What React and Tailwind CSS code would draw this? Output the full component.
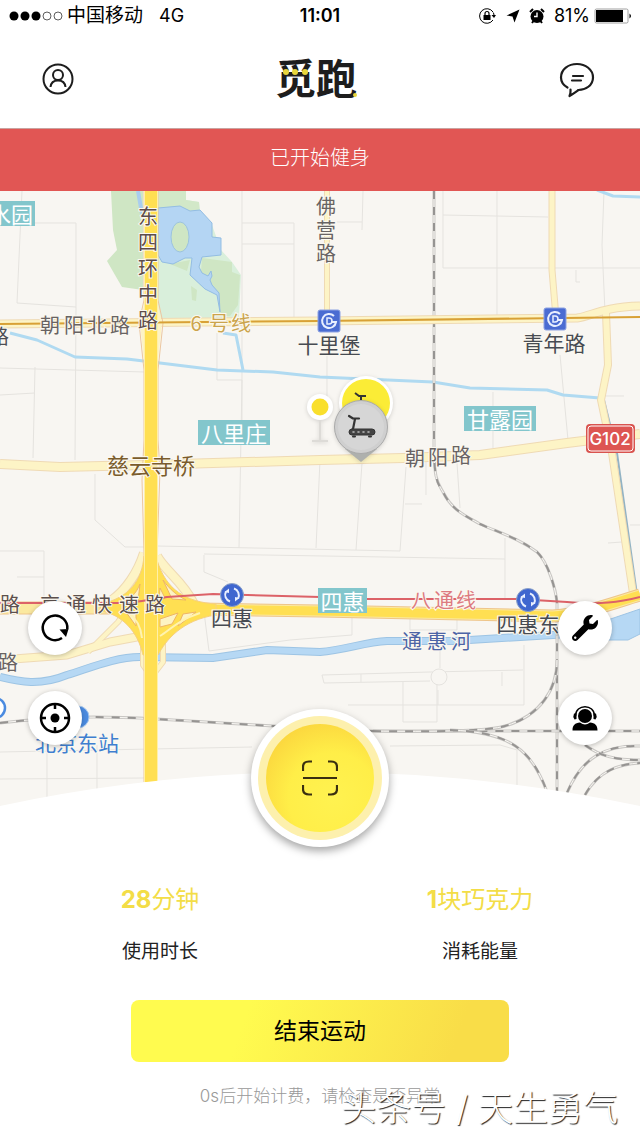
import { FaWrench } from "react-icons/fa";

// thin grey streets in the background of the map
const streets = [
  "M22 191L17 303L76 307", "M0 223H76V307L75 460", "M35 367L33 458", "M0 395L35 393", "M0 368L145 372",
  "M242 191V380L239 548", "M242 223H294V317", "M242 244H294", "M217 333V380H242V420", "M327 340V400",
  "M95 474V520L125 547H145", "M0 551H44V600", "M17 577H44", "M157 546L400 551L406 467",
  "M204 555V572L228 582", "M204 554L505 559", "M505 538V600", "M362 463L356 550", "M320 460L316 548",
  "M443 191V268H640", "M497 191V317", "M443 215L548 217", "M604 191L602 245L605 312", "M363 191L362 230", "M337 222H362",
  "M576 270V282H580", "M560 355L568 440", "M493 392V448", "M457 463L460 508", "M426 460V495", "M405 504H422",
  "M608 543L622 542", "M630 525H640", "M600 396H624",
  "M204 612L209 651L290 640L352 635V618", "M410 618V630H457V618", "M322 675L430 672L523 670", "M322 675L324 683L430 681",
  "M361 674V682", "M403 682V722H437V682", "M348 705H524V645", "M438 690V705", "M440 645V668", "M502 672V686",
  "M390 746L500 745L517 750V790", "M47 750V800", "M97 745V790", "M0 752L252 747", "M0 779L145 778",
];

const rails = [
  "M434 191V440C434 480 437 482 443 492C452 510 464 515 480 524C500 533 518 538 537 552C548 562 556 590 557 603V795",
  "M0 723C60 716 100 716 157 719L273 726L370 731H640",
  "M373 731C430 732 490 731 505 726C540 716 557 690 557 660",
  "M450 730C510 732 532 750 547 792",
  "M567 793C582 757 606 745 640 746",
  "M585 795C599 770 620 764 640 763",
  "M585 745C600 756 615 760 640 760",
];

// pale secondary roads: [path, width]
const paleRoads = [
  ["M0 464L60 467L145 465L320 460L403 458L480 455L567 443L640 434", 10],
  ["M327 191V320", 6],
  ["M552 191V270L556 318", 7],
  ["M606 313L608 365L601 400L612 453L634 600", 8],
  ["M0 324L320 321L577 318C592 316 602 307 640 306", 9],
  ["M0 660L67 655L110 642L142 636", 9],
  ["M88 652L118 622L140 590", 6],
  ["M144 553C138 572 126 590 112 600", 10],
  ["M157 556C166 572 182 580 194 604", 10],
  ["M143 640V665L150 675", 6],
  ["M163 640V662L153 675", 6],
];

const river = "M0 677C20 682 40 686 67 675C90 668 115 657 140 657L213 658L267 650L320 652C345 650 365 642 387 641L453 641L553 635L600 632";

const expressway = "M0 608H110L200 609L320 611L553 616C585 614 610 604 640 595";

const grey = "#686363";

// road names are set one character at a time along their road
const roadLabels = [
  { text: "朝阳北路", x: [50, 74, 97, 120], y: [324], fill: grey },
  { text: "东四环中路", x: [148, 148, 148, 148, 148], y: [215, 241, 267, 293, 319], fill: "#5d4c49" },
  { text: "佛营路", x: [326, 326, 326], y: [205, 229, 252], fill: grey },
  { text: "6号线", x: [196, 219, 241], y: [322], fill: "#cba44c" },
  { text: "朝阳路", x: [415, 438, 461], y: [457, 456, 454], fill: grey },
  { text: "京通快速路", x: [50, 76, 102, 129, 155], y: [603], fill: "#5c504d" },
  { text: "八通线", x: [421, 444, 466], y: [599], fill: "#dd7a80" },
  { text: "通惠河", x: [412, 437, 461], y: [640], fill: "#4c64a6" },
  { text: "路", x: [-1], y: [335], fill: "#4d4f55" },
  { text: "路", x: [10], y: [603], fill: "#5c504d" },
  { text: "路", x: [8], y: [661], fill: grey },
];

const placeLabels = [
  { text: "十里堡", x: 329, y: 344, size: 21, fill: "#474b52" },
  { text: "青年路", x: 554, y: 342, size: 21, fill: "#474b52" },
  { text: "慈云寺桥", x: 151, y: 464, size: 22, fill: "#7a5c2c" },
  { text: "四惠", x: 232, y: 617, size: 21, fill: "#474b52" },
  { text: "四惠东", x: 528, y: 623, size: 21, fill: "#474b52" },
  { text: "北京东站", x: 77, y: 742, size: 21, fill: "#3f7fd0" },
];

const areaTags = [
  { text: "水园", x: -13, y: 201, w: 48 },
  { text: "八里庄", x: 198, y: 420, w: 72 },
  { text: "甘露园", x: 464, y: 406, w: 72 },
  { text: "四惠", x: 318, y: 588, w: 49 },
];

function SubwayStop({ x, y }) {
  return (
    <g transform={`translate(${x} ${y})`}>
      <rect x="-11" y="-11" width="22" height="22" rx="2" fill="#4a6cd2" stroke="#8da2e2" />
      <path d="M5 -5A7 7 0 1 0 7 1H2" fill="none" stroke="#e8efff" strokeWidth="2" />
      <path d="M-2 -3V3H0A3 3 0 0 0 0 -3Z" fill="none" stroke="#e8efff" strokeWidth="1.5" />
    </g>
  );
}

function LoopStop({ x, y }) {
  return (
    <g transform={`translate(${x} ${y})`}>
      <circle r="11.5" fill="#3f66cf" stroke="#8da2c8" />
      <g fill="none" stroke="#e8efff" strokeWidth="2">
        <path d="M-2 6.5A7 7 0 0 1 -6 -3.500" />
        <path d="M2 -6.5A7 7 0 0 1 6 3.500" />
      </g>
      <path d="M-7.500 -3L-3 -6.500L-3 -2ZM7.500 3L3 6.500L3 2Z" fill="#e8efff" />
    </g>
  );
}

function Treadmill() {
  return (
    <g stroke="#333" strokeLinecap="round" strokeLinejoin="round" fill="none">
      <path d="M-12 -10L-8 -7.5H-2M-6 -7L-8 3" strokeWidth="2.200" />
      <rect x="-12" y="3" width="26" height="6" rx="3" fill="#444" strokeWidth="1" />
      <path d="M-8 6H11" stroke="#bbb" strokeDasharray="1 4" strokeWidth="1.6" />
      <path d="M-8 10.5H-6M8 10.5H10" strokeWidth="2" />
    </g>
  );
}

function CityMap() {
  return (
    <svg
      viewBox="0 191 640 615"
      className="block w-full font-['Noto_Sans_CJK_SC',sans-serif]"
      preserveAspectRatio="xMidYMid slice"
    >
      <rect y="191" width="640" height="615" fill="#f8f6f2" />

      {/* park and lake */}
      <path d="M111 191L113 230L117 250L107 261L115 275L122 287L143 290V191Z" fill="#cfe6c4" />
      <path d="M158 191H186V200L199 202L200 212L212 225L221 250L232 262L241 275L239 318H158Z" fill="#d9efdb" />
      <path d="M158 191H186V200L199 202L200 215H158Z" fill="#d2e8c8" />
      <path d="M202 258L232 262V272L240 275L238 305L230 316H221L217 292L200 285Z" fill="#cfe6c4" />
      <path d="M170 264L190 260L187 271ZM191 286L197 290L196 301L192 300Z" fill="#cfe6c4" />
      <path
        d="M158 208L180 206L190 211L200 210L212 223V237L221 238V255L202 257L199 267L202 273L208 276L211 271L212 276L210 280L212 285L219 293L220 312L217 295L205 289L190 275L192 258L185 258L173 264L162 262L158 255Z"
        fill="#b4d5f3"
        stroke="#93bde3"
        strokeWidth="1"
      />
      <ellipse cx="180" cy="237" rx="9" ry="15" fill="#cfe6c4" stroke="#9cc3df" />
      <path d="M138 191L142 214" stroke="#a9cdee" strokeWidth="4" />

      <g fill="none" stroke="#e5e3df" strokeWidth="1">
        {streets.map((d) => (
          <path key={d} d={d} />
        ))}
        <circle cx="439" cy="677" r="8" fill="#f8f6f2" />
      </g>

      {/* water */}
      <g fill="none" stroke="#b0daf1" strokeWidth="3" strokeLinejoin="round">
        <path d="M10 333L37 340L75 357L127 359L160 363L217 370L273 372L320 377L433 382L470 388L547 390L563 395L600 398" />
        <path d="M223 333L236 335L243 370" />
        <path d="M597 190L613 196L640 197" />
        <path d="M604 400L617 453L637 595" strokeWidth="2" stroke="#92b3c4" />
      </g>
      <path d={river} fill="none" stroke="#9dc4e4" strokeWidth="8" />
      <path d={river} fill="none" stroke="#b6d8f4" strokeWidth="6" />
      <path d="M590 626L640 609V634L628 640H590Z" fill="#b6d8f4" stroke="#9dc4e4" />

      {/* railway */}
      <g fill="none">
        {rails.map((d) => (
          <g key={d}>
            <path d={d} stroke="#c9c7c4" strokeWidth="3" />
            <path d={d} stroke="#f8f6f2" strokeWidth="1" />
            <path d={d} stroke="#969492" strokeWidth="2" strokeDasharray="8 8" />
          </g>
        ))}
      </g>

      {/* secondary roads */}
      <g fill="none" strokeLinejoin="round">
        {paleRoads.map(([d, w]) => (
          <path key={d} d={d} stroke="#efdab4" strokeWidth={w} />
        ))}
        {paleRoads.map(([d, w]) => (
          <path key={d} d={d} stroke="#fdf4c6" strokeWidth={w - 2} />
        ))}
      </g>

      {/* ring road, expressway and the interchange */}
      <g fill="none" strokeLinejoin="round">
        <path d="M144 191V300L139 323L144 370V440L142 480L144 555V782M158 191V300L163 323L158 370V440L160 470L157 555V782" stroke="#ecc7a0" />
        <path d="M145 300L140 323L145 370H157L162 323L157 300Z" fill="#fdf3c4" />
        <path d={expressway} stroke="#eec58a" strokeWidth="13" />
        <path d={expressway} stroke="#fbe9a0" strokeWidth="11" />
        <path d="M120 608L200 609L320 611L553 616C585 614 610 604 640 595" stroke="#ffdf52" strokeWidth="9" />
        <path
          d="M144 556C142 580 130 598 100 604V611C122 614 138 632 143 655H158C166 640 182 620 216 615V604C186 602 166 590 157 560Z"
          fill="#ffdf52"
          stroke="#f6d080"
        />
        <path
          d="M140 584C136 594 130 599 124 601H138ZM163 580C170 590 178 596 186 600L172 599ZM160 588L165 598L159 600ZM160 619L178 613L172 624L160 627ZM183 614L196 612L178 626ZM126 612L136 613V626Z"
          fill="#fdf3c4"
          stroke="#eeb566"
        />
        <path d="M160 636C170 630 178 620 200 613M128 612C136 618 141 628 142 638" stroke="#fff3b0" strokeWidth="2" />
        <path d="M151 191V782" stroke="#fff0a8" strokeWidth="14" />
        <path d="M151 191V782" stroke="#ffdf52" strokeWidth="12" />
      </g>

      {/* metro lines */}
      <path d="M0 324L320 321L640 317" stroke="#d8a136" strokeWidth="2" fill="none" />
      <path
        d="M0 603H117C140 603 150 599 167 597L213 594L320 597L367 599L517 599L567 602C600 605 620 602 640 597"
        stroke="#dc6268"
        strokeWidth="2"
        fill="none"
      />
      <SubwayStop x={329} y={321} />
      <SubwayStop x={555} y={319} />
      <LoopStop x={232} y={595} />
      <LoopStop x={528} y={600} />
      <circle cx="-5" cy="708" r="10" fill="#fff" stroke="#4b8be0" strokeWidth="2.5" />
      <circle cx="78" cy="717" r="11" fill="#4b8be0" stroke="#a8c8ee" />

      {/* labels */}
      <g textAnchor="middle" dominantBaseline="central" paintOrder="stroke" stroke="#fbf8f0" strokeWidth="2">
        {roadLabels.map((l) => (
          <text key={l.text + l.x[0]} x={l.x.join(" ")} y={l.y.join(" ")} fill={l.fill} fontSize="20">
            {l.text}
          </text>
        ))}
        {placeLabels.map((l) => (
          <text key={l.text} x={l.x} y={l.y} fill={l.fill} fontSize={l.size}>
            {l.text}
          </text>
        ))}
      </g>
      <g textAnchor="middle" dominantBaseline="central" fill="#fff" fontSize="22">
        {areaTags.map((t) => (
          <g key={t.text}>
            <rect x={t.x} y={t.y} width={t.w} height="25" fill="#83c6cc" />
            <text x={t.x + t.w / 2} y={t.y + 12}>{t.text}</text>
          </g>
        ))}
      </g>
      <rect x="586" y="424" width="49" height="29" rx="4" fill="#d9534f" />
      <rect x="588" y="426" width="45" height="25" rx="3" fill="#dd5552" stroke="#fff" strokeWidth="1" />
      <text x="610" y="439" textAnchor="middle" dominantBaseline="central" fill="#fff" fontSize="17" fontWeight="500" fontFamily="Inter, sans-serif">
        G102
      </text>

      {/* treadmill pins */}
      <g className="drop-shadow-sm">
        <path d="M320 420V440M312 441H328" stroke="#dddbd7" strokeWidth="2" />
        <circle cx="320" cy="407" r="13" fill="#fff" />
        <circle cx="320" cy="407" r="8.5" fill="#f9df2c" />
      </g>
      <g className="drop-shadow-sm">
        <circle cx="366" cy="403" r="27" fill="#fff" />
        <circle cx="366" cy="403" r="24" fill="#fbec36" />
        <path d="M355 393L359 396H366M361 396V400" stroke="#333" strokeWidth="2" fill="none" />
      </g>
      <g className="drop-shadow-sm">
        <path d="M345 449L361 462L377 449Z" fill="#aeb0ad" />
        <circle cx="361" cy="427" r="26.5" fill="#cfcfcf" stroke="#a9a9a9" />
        <circle cx="361" cy="427" r="23" fill="#d6d6d6" />
        <g transform="translate(361 426)">
          <Treadmill />
        </g>
      </g>

      {/* white arc under the map */}
      <path d="M0 806Q320 738 640 806Z" fill="#fff" />
    </svg>
  );
}

function RoundButton({ label, children }) {
  return (
    <button
      aria-label={label}
      className="flex size-[54px] items-center justify-center rounded-full bg-white text-black shadow-[0_1px_5px_rgba(0,0,0,0.25)]"
    >
      {children}
    </button>
  );
}

function StatusBar() {
  return (
    <div className="flex h-8 items-center px-2 text-lg text-black">
      <div className="flex flex-1 items-center">
        <svg viewBox="0 0 56 12" className="h-3 w-14">
          <circle cx="6" cy="6" r="4.5" />
          <circle cx="17" cy="6" r="4.5" />
          <circle cx="28" cy="6" r="4.5" />
          <circle cx="39" cy="6" r="4" fill="none" stroke="#333" strokeWidth="0.8" />
          <circle cx="50" cy="6" r="4" fill="none" stroke="#333" strokeWidth="0.8" />
        </svg>
        <span className="ml-[3px] text-[19px]">中国移动</span>
        <span className="ml-4">4G</span>
      </div>
      <span className="font-semibold">11:01</span>
      <div className="flex flex-1 items-center justify-end">
        {/* orientation lock */}
        <svg viewBox="0 0 18 18" className="size-[18px]" fill="none" stroke="#000">
          <path d="M15 5A7.300 7.300 0 1 0 15 13M15.300 5.500Q16 7 16 8.500" strokeWidth="1" />
          <path d="M13.500 8L16 11L18 8Z" fill="#000" stroke="none" />
          <rect x="5.500" y="8" width="7" height="5" fill="#000" stroke="none" />
          <path d="M7 8V6.500A2 2 0 0 1 11 6.500V8" strokeWidth="1.200" />
        </svg>
        {/* location arrow */}
        <svg viewBox="0 0 14 14" className="ml-[10px] size-[14px]">
          <path d="M13.500 0.500L0.500 6.500L6.500 7.500L8.500 13.500Z" />
        </svg>
        {/* alarm clock */}
        <svg viewBox="0 0 18 18" className="ml-2 size-[18px]">
          <circle cx="9" cy="9.500" r="6.500" />
          <path d="M9 5.500V9.500H6" stroke="#fff" strokeWidth="1.400" fill="none" />
          <path d="M2 5L5 2M16 5L13 2M4 16L5.500 14M14 16L12.500 14" stroke="#000" strokeWidth="2" />
        </svg>
        <span className="ml-2">81%</span>
        <svg viewBox="0 0 38 16" className="ml-1 h-4 w-[38px]">
          <rect x="1" y="1" width="33" height="14" rx="1.500" fill="none" stroke="#888" strokeWidth="0.800" />
          <rect x="2" y="2" width="27" height="12" />
          <path d="M35.500 5.500Q38.500 8 35.500 10.500Z" />
        </svg>
      </div>
    </div>
  );
}

function Header() {
  return (
    <header className="flex h-24 items-center justify-between pr-11 pb-[2px] pl-10">
      <button aria-label="我的" className="flex size-9 items-center justify-center">
        <svg viewBox="0 0 36 36" className="size-9" fill="none" stroke="#1d1d1d" strokeWidth="2">
          <circle cx="18" cy="18" r="14.5" />
          <circle cx="18" cy="14" r="5" />
          <path d="M10.500 26C11 21.500 14 19.500 18 19.500S25 21.500 25.500 26" />
        </svg>
      </button>
      <h1 className="relative text-[41px] leading-none font-bold text-[#1d1d1d]">
        觅跑
        <svg viewBox="0 0 82 41" className="absolute inset-0 size-full" fill="#e8d63c">
          <circle cx="11" cy="13" r="3" />
          <circle cx="20" cy="13" r="3" />
          <circle cx="30" cy="13" r="3" />
          <circle cx="80" cy="36" r="2" />
        </svg>
      </h1>
      <button aria-label="消息" className="flex size-10 items-center justify-center">
        <svg viewBox="0 0 40 40" className="size-10" fill="none" stroke="#1d1d1d" strokeWidth="2.200" strokeLinecap="round" strokeLinejoin="round">
          <path d="M11.500 28.500C7 26 5 22 5 18.500C5 10 12.500 5 21 5S37 10.500 37 18.500S29.500 31 22.500 31C19 33.500 17 35 13.500 37C15 34 14.500 32 14.500 30.500" />
          <path d="M17 17H27M16 21.500H25" />
        </svg>
      </button>
    </header>
  );
}

function Stat({ number, unit, label }) {
  return (
    <div className="flex flex-1 flex-col items-center gap-5">
      <p className="text-2xl leading-8 text-[#f3dd47]">
        <span className="font-bold">{number}</span>
        {unit}
      </p>
      <p className="text-[19px] leading-8 text-[#222]">{label}</p>
    </div>
  );
}

export default function App() {
  return (
    <div className="relative min-h-screen overflow-hidden bg-white font-['Inter','Noto_Sans_CJK_SC',sans-serif]">
      <StatusBar />
      <Header />

      <div className="flex h-[63px] items-center justify-center border-t border-[#c9a3a0] bg-[#e15654] pb-1 text-xl font-light text-white">
        已开始健身
      </div>

      <main>
        <div className="relative">
          <CityMap />

          <div className="absolute bottom-[61px] left-7 flex flex-col gap-9">
            <RoundButton label="刷新">
              <svg viewBox="0 0 32 32" className="size-8" fill="none" stroke="#000" strokeWidth="2.500">
                <path d="M23 26A12.300 12.300 0 1 1 28.300 17" />
                <path d="M20.500 17.500L29.500 17L27 25Z" fill="#000" stroke="none" />
              </svg>
            </RoundButton>
            <RoundButton label="定位">
              <svg viewBox="0 0 32 32" className="size-8" fill="none" stroke="#000" strokeWidth="2.500">
                <circle cx="16" cy="16" r="14" />
                <circle cx="16" cy="16" r="4.500" fill="#000" stroke="none" />
                <path d="M16 2V7M16 25V30M2 16H7M25 16H30" />
              </svg>
            </RoundButton>
          </div>

          <div className="absolute right-7 bottom-[61px] flex flex-col gap-9">
            <RoundButton label="报修">
              <FaWrench className="size-[26px]" />
            </RoundButton>
            <RoundButton label="客服">
              <svg viewBox="0 0 28 28" className="size-7">
                <circle cx="14" cy="12" r="7" />
                <path d="M4.500 12C4.500 -0.500 23.500 -0.500 23.500 12" fill="none" stroke="#000" strokeWidth="1.500" />
                <path d="M3 9.500Q1.500 12.500 3.500 15.500L5.500 15V9.500ZM25 9.500Q26.500 12.500 24.500 15.500L22.500 15V9.500Z" />
                <path d="M1.500 26.500C1.500 21 4 19 9 18.500Q14 22.500 19 18.500C24 19 26.500 21 26.500 26.500Z" />
              </svg>
            </RoundButton>
          </div>
        </div>

        <section className="relative -mt-[97px] flex flex-col items-center">
          <button
            aria-label="扫码"
            className="flex size-[138px] items-center justify-center rounded-full bg-white shadow-[0_4px_8px_rgba(0,0,0,0.35)]"
          >
            <span className="flex size-[124px] items-center justify-center rounded-full bg-[#fdf0ad]">
              <span className="flex size-[108px] items-center justify-center rounded-full bg-[radial-gradient(circle_at_62%_68%,#fff250_0%,#ffee48_45%,#fbd63e_80%,#f8c63c_100%)]">
                <svg viewBox="0 0 36 36" className="size-9" fill="none" stroke="#3a2f10" strokeWidth="2.200">
                  <path d="M1 11V7Q1 1.500 7 1.500H10M26 1.500H29Q35 1.500 35 7V11M35 25V29Q35 34.500 29 34.500H26M10 34.500H7Q1 34.500 1 29V25M1 18H35" />
                </svg>
              </span>
            </span>
          </button>

          <div className="mt-[37px] flex w-full">
            <Stat number="28" unit="分钟" label="使用时长" />
            <Stat number="1" unit="块巧克力" label="消耗能量" />
          </div>

          <button className="mt-8 h-[62px] w-[59%] rounded-lg bg-linear-[110deg] from-[#fffb4f] from-30% to-[#f9dd48] to-85% text-[23px] text-black">
            结束运动
          </button>

          <p className="mt-5 text-[17px] leading-7 font-light text-[#999]">0s后开始计费，请检查是否异常</p>
        </section>
      </main>

      <p className="absolute right-[22px] bottom-1 text-[35px] leading-[52px] font-light text-white [text-shadow:1px_1px_1px_#222]">
        头条号 / 天生勇气
      </p>
    </div>
  );
}
